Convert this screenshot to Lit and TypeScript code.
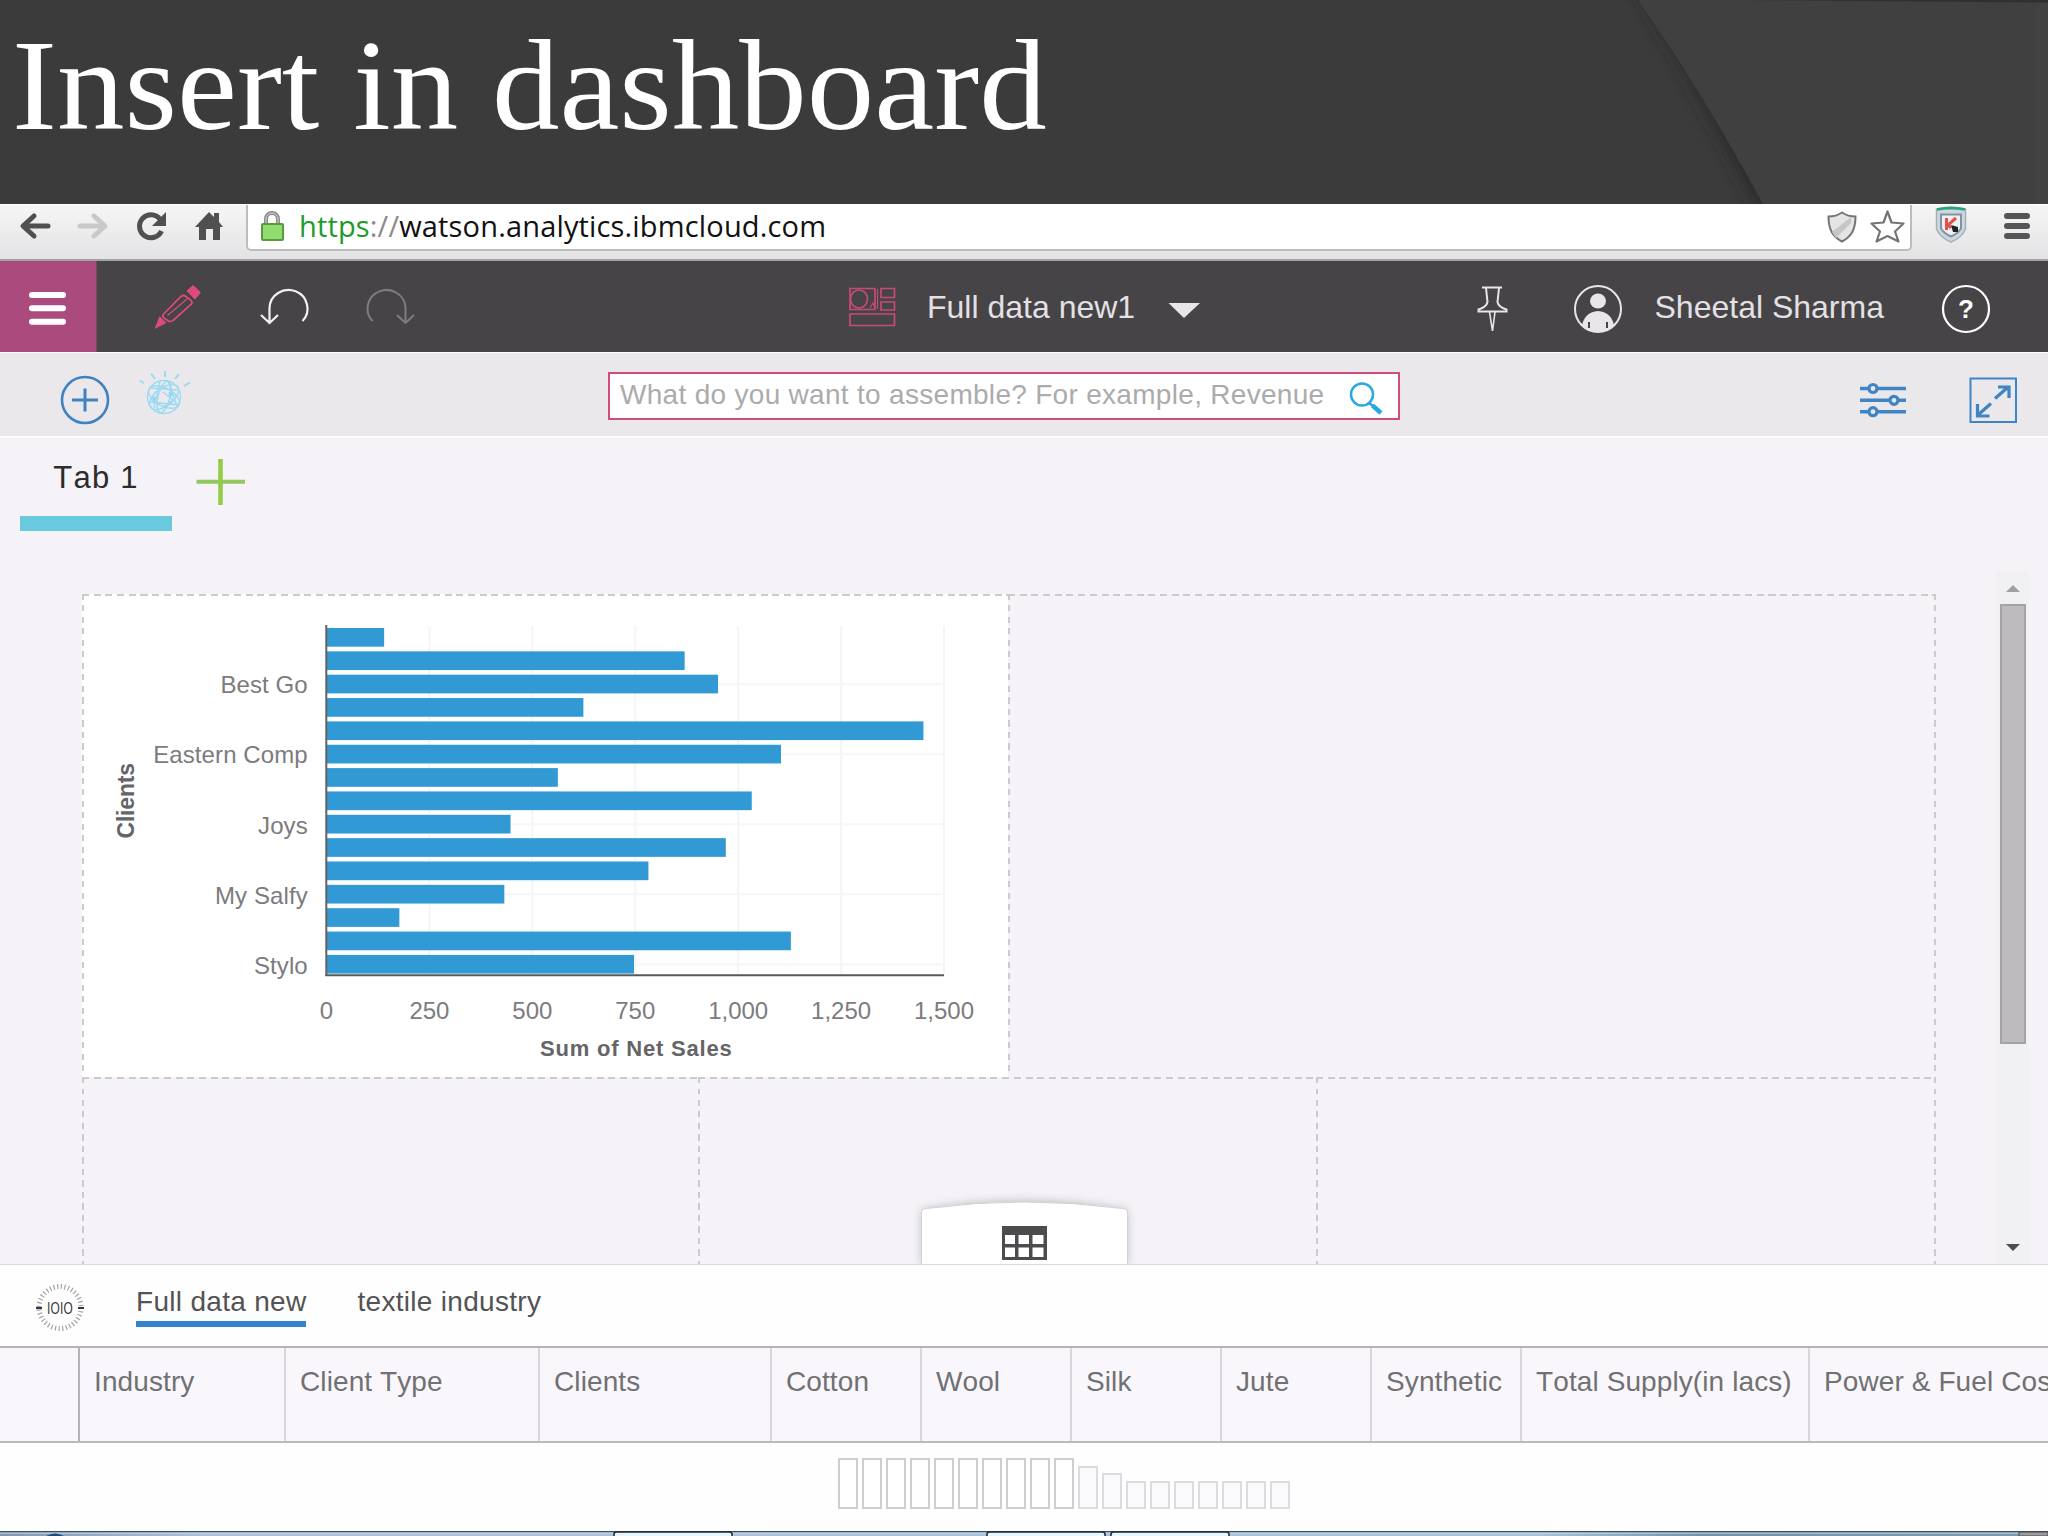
import { LitElement, html, css, svg } from "lit";
import { customElement } from "lit/decorators.js";
import { classMap } from "lit/directives/class-map.js";

/* Every icon's viewBox uses page coordinates, so paths can be read against the layout. */

@customElement("slide-title")
class SlideTitle extends LitElement {
  static styles = css`
    :host { display: block; height: 204px; background: #3b3b3b; position: relative; overflow: hidden; }
    h1 { margin: 0; padding: 21px 0 0 12px; color: #fff; font: 400 135px/140px "Liberation Serif", serif; white-space: nowrap; position: relative; transform: scaleY(0.95); transform-origin: 0 0; }
    svg { position: absolute; right: 0; top: 0; }
  `;
  render() {
    return html`
      <svg width="548" height="204" viewBox="1500 0 548 204">
        <defs>
          <filter id="soft" x="-50%" y="-20%" width="200%" height="140%"><feGaussianBlur stdDeviation="8" /></filter>
        </defs>
        <path d="M1632 -20 1690 80 1760 212H2100V-20Z" fill="#262626" opacity=".75" filter="url(#soft)" />
        <path d="M1638 0Q1700 88 1763 204H2048V0Z" fill="#404040" />
        <path d="M1735 0 2048 2.5V0Z" fill="#303030" />
        <path d="M2036 3h12v201h-12Z" fill="#444" opacity=".5" />
      </svg>
      <h1>Insert in dashboard</h1>
    `;
  }
}

@customElement("browser-bar")
class BrowserBar extends LitElement {
  static styles = css`
    :host { display: flex; box-sizing: border-box; height: 57px; background: linear-gradient(#f6f6f6, #e3e2e4); border-bottom: 2px solid #a3a2a5; border-top: 1px solid #fff; }
    svg { display: block; flex: none; }
    .address { display: flex; width: 1666px; height: 46px; box-sizing: border-box; background: #fff; border: 2px solid #bdbcbf; border-top: 0; border-radius: 0 0 5px 5px; margin-left: -1px; margin-right: 1px; }
    .url { width: 1520px; font: 29px/42px "Open Sans", "Noto Sans", sans-serif; color: #111; white-space: nowrap; letter-spacing: 0.160px; }
    .scheme { color: #1f9a2c; }
    .slashes { color: #8b8b8b; }
  `;
  render() {
    return html`
      <svg width="247" height="46" viewBox="0 205 247 46" fill="none" stroke-linecap="round" stroke-linejoin="round">
        <path d="M48 226H24M34 216 23 226l11 10" stroke="#505052" stroke-width="5" />
        <path d="M80 226h24M94 216l11 10-11 10" stroke="#c9c9cb" stroke-width="5" />
        <path d="M160 219a11.500 11.500 0 1 0 1.500 12" stroke="#505052" stroke-width="5" stroke-linecap="butt" />
        <path d="M166 212v14h-14Z" fill="#505052" />
        <path d="M195 227 209 212l5 5v-4h5v9l4 5h-3v13h-7v-11h-7v11h-7v-13Z" fill="#505052" />
      </svg>
      <div class="address">
        <svg width="51" height="44" viewBox="249 205 51 44">
          <path d="M267 224v-5a6 6 0 0 1 12 0v5" fill="none" stroke="#8b8b8d" stroke-width="4" />
          <path d="M267 224v-5a6 6 0 0 1 12 0v5" fill="none" stroke="#d5d5d5" stroke-width="1" />
          <rect x="263" y="224" width="21" height="16" rx="1" fill="#90dd6d" stroke="#5a9a3f" stroke-width="2" />
        </svg>
        <span class="url"><span class="scheme">https</span><span class="slashes">://</span>watson.analytics.ibmcloud.com</span>
        <svg width="91" height="44" viewBox="1819 205 91 44">
          <path d="M1842 212.500q-6 4-13.500 4c0 13 4 20 13.500 25 9.500-5 13.500-12 13.500-25q-7.500 0-13.500-4Z" fill="#e4e4e4" stroke="#757577" stroke-width="2" />
          <path d="M1832 232 1851 217v6l-15 15Z" fill="#c6c6c6" />
          <path d="M1887.500 211.500 1891.500 222.500 1903.500 223.500 1895 231.500 1898.500 241.500 1887.500 236 1876.500 241.500 1880 231.500 1871.500 223.500 1883.500 222.500Z" fill="#fff" stroke="#737375" stroke-width="2.200" stroke-linejoin="round" />
        </svg>
      </div>
      <svg width="135" height="54" viewBox="1913 205 135 54">
        <path d="M1936.500 209q14.500-3 29 0v20q-4 9-14.500 13-10.500-4-14.500-13Z" fill="#cfd8df" stroke="#a3b0ba" stroke-width="1.500" />
        <path d="M1937 209.500q14-3 28 0" fill="none" stroke="#2ba184" stroke-width="2.800" />
        <path d="M1941 214.500h20v14q-3 5-10 8-7-3-10-8Z" fill="#edf1f4" stroke="#8493a2" stroke-width="2" />
        <path d="M1946.500 218v12M1956 218l-8 7 3 3" fill="none" stroke="#e4504c" stroke-width="3" />
        <path d="M1951 225l7 2v5h-5Z" fill="#222" />
        <path d="M2007 216h20M2007 226h20M2007 236h20" stroke="#555557" stroke-width="6" stroke-linecap="round" />
      </svg>
    `;
  }
}

@customElement("app-bar")
class AppBar extends LitElement {
  static styles = css`
    :host { display: flex; height: 92px; background: #464446; color: #e3e1e5; font: 32px/92px "Liberation Sans", Arial, sans-serif; white-space: nowrap; border-bottom: 1px solid #fff; box-sizing: border-box; }
    svg { display: block; flex: none; }
    .name { box-sizing: border-box; width: 242px; padding-left: 1px; }
    .user { box-sizing: border-box; width: 317px; padding-left: 1.500px; }
  `;
  render() {
    return html`
      <svg width="97" height="91" viewBox="0 261 97 91">
        <path d="M0 261h96.500v91H0Z" fill="#aa4a7d" />
        <path d="M32 295h31M32 308.300h31M32 321.700h31" stroke="#fff" stroke-width="6" stroke-linecap="round" />
      </svg>
      <svg width="829" height="91" viewBox="97 261 829 91" fill="none">
        <path d="M154.500 329l5-13 7 7Z" fill="#dc4a7b" />
        <path d="M187 291l6-5.500 7.500 7-5.500 6.500Z" fill="#dc4a7b" stroke="#dc4a7b" />
        <path d="M163.500 314 181 296.500q2.500-2 5 0l5 4q2 2 0 4l-18 16q-3 2-5.500 0l-4-3q-1.500-1.500 0-3.500Z" stroke="#dc4a7b" stroke-width="1.700" />
        <path d="M167.500 315.500 187 299" stroke="#dc4a7b" stroke-width="1.200" />
        <path d="M269.500 323V308a19 18.500 0 1 1 33 13M261 315l8.500 8 8.500-8" stroke="#f2f1f3" stroke-width="2.200" />
        <path d="M405.500 323V308a19 18.500 0 1 0-33 13M397 315l8.500 8 8.500-8" stroke="#7e7c7f" stroke-width="2" />
        <g stroke="#c84a77" stroke-width="1.700">
          <path d="M850 288.500h25v21h-25ZM881 288.500h13.500v9H881ZM881 302h13.500v8H881ZM850 314h44.500v11.500H850Z" />
          <ellipse cx="859" cy="299" rx="8.500" ry="9" />
          <path d="M870 308l3-5 2 5M877.500 289v20" stroke-width="1.200" />
        </g>
      </svg>
      <span class="name">Full data new1</span>
      <svg width="485" height="91" viewBox="1168 261 485 91" fill="none">
        <path d="M1168.500 303h31.500l-16 15Z" fill="#e8e6ea" />
        <g stroke="#e8e6ea" stroke-width="2">
          <path d="M1482 287.500h20M1486 288l1.500 14q-1 5-9 7.500v2h28v-2q-8-2.500-9-7.500l1.500-14" />
          <path d="M1489.500 312 1492.500 331 1495 312" stroke-width="1.600" />
        </g>
        <circle cx="1598" cy="309" r="23" stroke="#e8e6ea" stroke-width="2" />
        <ellipse cx="1598" cy="301" rx="8" ry="7.500" fill="#e8e6ea" />
        <path d="M1582 325q3-13 16-14 13 1 16 14-6 7-16 7t-16-7Z" fill="#e8e6ea" />
        <path d="M1589 322v6M1607 322v6" stroke="#464446" stroke-width="2" />
      </svg>
      <span class="user">Sheetal Sharma</span>
      <svg width="78" height="91" viewBox="1970 261 78 91" overflow="visible">
        <circle cx="1966" cy="309" r="23" fill="none" stroke="#fff" stroke-width="2.200" />
        <text x="1966" y="318" text-anchor="middle" fill="#fff" font-size="26" font-weight="bold">?</text>
      </svg>
    `;
  }
}

@customElement("tool-bar")
class ToolBar extends LitElement {
  static styles = css`
    :host { display: flex; box-sizing: border-box; height: 85px; background: #eae8eb; border-bottom: 2px solid #fdfcfe; }
    svg { display: block; flex: none; }
    .search { display: flex; box-sizing: border-box; width: 792px; height: 48px; margin-top: 19px; border: 2px solid #cf4d7e; background: #fff; color: #ababad; padding-left: 10px; font: 28px/42px "Liberation Sans", Arial, sans-serif; letter-spacing: 0.3px; white-space: nowrap; }
    .prompt { width: 720px; }
  `;
  render() {
    const rays = [
      [144, 383, 139.500, 380.500], [155, 379, 151, 373.500], [165, 377, 165, 371],
      [175, 379, 179, 374], [184, 386, 190, 382.500],
    ];
    return html`
      <svg width="608" height="83" viewBox="0 353 608 83" fill="none">
        <circle cx="85" cy="400" r="23" stroke="#3f82c0" stroke-width="2.600" />
        <path d="M72 400h26M85 388.500v23" stroke="#3f82c0" stroke-width="3" />
        <g stroke="#9bdaf3" stroke-width="1.400">
          ${rays.map(([a, b, c, d]) => svg`<path d="M${a} ${b} ${c} ${d}" stroke-width="2" />`)}
          <circle cx="164" cy="397" r="16.500" />
          <ellipse cx="164" cy="397" rx="17" ry="9" transform="rotate(28 164 397)" />
          <ellipse cx="164" cy="397" rx="17" ry="9" transform="rotate(-38 164 397)" />
          <ellipse cx="164" cy="397" rx="6" ry="16" transform="rotate(14 164 397)" />
          <path d="M151 388l26 2M149 402l30 3M160 381l-6 27M168 381l9 25M163 392l10 8-12 9" />
          <circle cx="154" cy="399" r="2" fill="#8fd6f2" />
          <circle cx="171" cy="394" r="2" fill="#8fd6f2" />
        </g>
      </svg>
      <div class="search">
        <span class="prompt">What do you want to assemble? For example, Revenue</span>
        <svg width="44" height="44" viewBox="1340 374 44 44" fill="none" stroke="#27a8e0">
          <circle cx="1362" cy="394.500" r="11" stroke-width="2.500" />
          <path d="M1369 403l4 3" stroke-width="2.500" />
          <path d="M1372.500 405.500 1381 413" stroke-width="4.500" />
        </svg>
      </div>
      <svg width="648" height="83" viewBox="1400 353 648 83" fill="none" stroke="#3f84c5">
        <path d="M1860 388.500h46M1860 400.300h46M1860 411.700h46" stroke-width="3.400" />
        <g fill="#eae8eb" stroke-width="3.200"><circle cx="1873" cy="388.500" r="4" /><circle cx="1894" cy="400.300" r="4" /><circle cx="1873" cy="411.700" r="4" /></g>
        <path d="M1970.500 378.500h45.500v43.500H1970.500Z" stroke-width="2" />
        <path d="M1995 398.500 2007 388M1998 387h11v11M1991 403.500 1979 414M1977.500 404v12h12" stroke-width="3.200" />
      </svg>
    `;
  }
}

@customElement("tab-strip")
class TabStrip extends LitElement {
  static styles = css`
    :host { display: flex; height: 134px; padding-left: 20px; box-sizing: border-box; }
    .tab { box-sizing: border-box; width: 152px; height: 93px; padding-top: 19px; border-bottom: 15px solid #69cadf; text-align: center; font: 31px/42px "Liberation Sans", Arial, sans-serif; font-kerning: none; letter-spacing: 1.200px; color: #2c2b2d; }
    svg { margin: 18px 0 0 20px; }
  `;
  render() {
    return html`
      <div class="tab">Tab 1</div>
      <svg width="56" height="56" viewBox="192 456 56 56">
        <path d="M196.500 481.700h48.500" stroke="#93c860" stroke-width="4" />
        <path d="M220.500 459v46" stroke="#93cc48" stroke-width="4.600" />
      </svg>
    `;
  }
}

@customElement("sales-chart")
class SalesChart extends LitElement {
  static styles = css`
    :host { display: block; }
    svg { display: block; }
    text { font: 24px "Liberation Sans", Arial, sans-serif; fill: #7c7b7e; }
    .title { font-weight: bold; font-size: 22px; fill: #656467; }
    .side { font-size: 23px; }
  `;
  private values = [140, 870, 951, 624, 1450, 1104, 562, 1033, 447, 970, 782, 432, 177, 1128, 747];
  private names: Record<number, string> = { 2: "Best Go", 5: "Eastern Comp", 8: "Joys", 11: "My Salfy", 14: "Stylo" };
  render() {
    const x = (v: number) => 326.5 + v * 0.41167;
    const top = (i: number) => 628 + i * 23.35;
    const ticks = [0, 250, 500, 750, 1000, 1250, 1500];
    return html`
      <svg width="924" height="481" viewBox="85 596 924 481">
        ${ticks.slice(1).map((t) => svg`<path d="M${x(t)} 626V974" stroke="#f6f4f7" stroke-width="2" />`)}
        ${Object.keys(this.names).map((i) => svg`<path d="M327 ${top(+i) + 9.5}H944" stroke="#f6f5f7" stroke-width="2" />`)}
        ${this.values.map((v, i) => svg`<rect x="327" y=${top(i)} width=${x(v) - 327} height="18.700" fill="#319ad4" />`)}
        <path d="M326.300 625V976" stroke="#626164" stroke-width="2" />
        <path d="M325.500 975.300H944" stroke="#59585b" stroke-width="2" />
        ${Object.entries(this.names).map(([i, n]) => svg`<text x="307.800" y=${top(+i) + 18.7} text-anchor="end" letter-spacing=".1">${n}</text>`)}
        ${ticks.map((t) => svg`<text x=${x(t)} y="1018.500" text-anchor="middle">${t.toLocaleString("en-US")}</text>`)}
        <text class="title" x="540" y="1056" letter-spacing=".8">Sum of Net Sales</text>
        <text class="title side" transform="translate(133.500 838.500) rotate(-90)" letter-spacing="-.2">Clients</text>
      </svg>
    `;
  }
}

@customElement("dash-board")
class DashBoard extends LitElement {
  static styles = css`
    :host { display: flex; height: 693px; padding-left: 82px; box-sizing: border-box; position: relative; overflow: hidden; border-bottom: 1px solid #dddbdf; }
    .grid { width: 1854px; margin-top: 22px; }
    .row { display: grid; }
    .top { grid-template-columns: 926px 928px; height: 483px; }
    .low { grid-template-columns: 616px 618px 620px; height: 187px; }
    .cell { background:
      repeating-linear-gradient(90deg, #cbcacd 0 7px, transparent 7px 11.700px) 0 0 / 100% 2px no-repeat,
      repeating-linear-gradient(#cbcacd 0 6px, transparent 6px 11.500px) 0 0 / 2px 100% no-repeat; }
    .last { background:
      repeating-linear-gradient(90deg, #cbcacd 0 7px, transparent 7px 11.700px) 0 0 / 100% 2px no-repeat,
      repeating-linear-gradient(#cbcacd 0 6px, transparent 6px 11.500px) 0 0 / 2px 100% no-repeat,
      repeating-linear-gradient(#cbcacd 0 6px, transparent 6px 11.500px) 100% 0 / 2px 100% no-repeat; }
    .filled { background-color: #fff; padding: 2px 0 0 3px; box-sizing: border-box; }
    .scroll { width: 33px; height: 692px; margin-left: 60px; background: #f1f0f3; display: flex; flex-direction: column; align-items: center; }
    .thumb { width: 26px; height: 440px; box-sizing: border-box; background: #bdbbbe; border: 2px solid #a5a3a6; margin-bottom: auto; margin-right: -1px; }
    .up { margin: 12px 0; }
    .down { margin-bottom: 12px; }
    .pull { position: absolute; left: 902px; bottom: -1px; }
    svg { display: block; flex: none; }
  `;
  render() {
    return html`
      <div class="grid">
        <div class="row top">
          <div class="cell filled"><sales-chart></sales-chart></div>
          <div class="cell last"></div>
        </div>
        <div class="row low">
          <div class="cell"></div>
          <div class="cell"></div>
          <div class="cell last"></div>
        </div>
      </div>
      <div class="scroll">
        <svg class="up" width="14" height="8" viewBox="0 0 14 8"><path d="M0 8 7 1l7 7Z" fill="#a09fa1" /></svg>
        <div class="thumb"></div>
        <svg class="down" width="14" height="8" viewBox="0 0 14 8"><path d="M0 0 7 7l7-7Z" fill="#4d4c4e" /></svg>
      </div>
      <svg class="pull" width="245" height="80" viewBox="902 1185 245 80">
        <defs><filter id="glow" x="-20%" y="-40%" width="140%" height="180%"><feGaussianBlur stdDeviation="5" /></filter></defs>
        <path d="M922 1265V1210Q1024 1192 1127 1210V1265Z" fill="#9b9a9d" opacity=".65" filter="url(#glow)" />
        <path d="M921.500 1270V1213q0-4 5-4.500 98-13 196 0 5 .5 5 4.500V1270Z" fill="#fff" stroke="#d2d1d4" stroke-width="1" />
        <path d="M1002 1226h45v34h-45Z" fill="#4d4b4e" />
        <path d="M1005 1235h10v9h-10ZM1018.500 1235h10.500v9h-10.500ZM1032.500 1235h11v9h-11ZM1005 1247.500h10v9.500h-10ZM1018.500 1247.500h10.500v9.500h-10.500ZM1032.500 1247.500h11v9.500h-11Z" fill="#fff" />
      </svg>
    `;
  }
}

@customElement("data-tray")
class DataTray extends LitElement {
  static styles = css`
    :host { display: block; height: 266px; background: #fefefe; font: 28px/32px "Liberation Sans", Arial, sans-serif; font-kerning: none; color: #535255; white-space: nowrap; letter-spacing: 0.1px; }
    .sets { display: flex; height: 81px; box-sizing: border-box; letter-spacing: 0.3px; }
    svg { display: block; }
    .set { height: 62px; box-sizing: border-box; padding-top: 21px; margin-left: 36px; border-bottom: 6px solid transparent; }
    .set + .set { margin-left: 51px; }
    .active { border-color: #3583ca; }
    .columns { display: grid; grid-template-columns: 80px 206px 254px 232px 150px 150px 150px 150px 150px 288px 238px; height: 97px; box-sizing: border-box; border-top: 2px solid #b3b2b5; border-bottom: 2px solid #b9b8bb; background: #f9f7fb; color: #717073; overflow: hidden; }
    .col { padding: 18px 0 0 14px; border-right: 2px solid #d8d6da; overflow: hidden; }
    .col:last-child { border-right: 0; }
    .stub { border-color: #b3b2b5; }
    .meter { display: flex; align-items: flex-end; gap: 4px; height: 66px; padding: 0 0 0 838px; }
    .bar { box-sizing: border-box; width: 20px; height: 28px; border: 2px solid #dddbdf; background: #faf9fc; }
    .tall { height: 51px; border-color: #cecdd0; background: #fff; }
    .mid { height: 43px; }
    .low { height: 36px; }
  `;
  render() {
    const columns = ["", "Industry", "Client Type", "Clients", "Cotton", "Wool", "Silk", "Jute", "Synthetic", "Total Supply(in lacs)", "Power & Fuel Cost"];
    return html`
      <div class="sets">
        <svg width="100" height="81" viewBox="0 1265 100 81">
          <circle cx="60" cy="1307.500" r="21" fill="none" stroke="#a5a4a7" stroke-width="5" stroke-dasharray="1.200 2.470" />
          <path d="M36 1308h6M78 1308h6" stroke="#39383a" stroke-width="2" />
          <text x="60" y="1313.500" text-anchor="middle" font-size="16" fill="#39383a" textLength="26" lengthAdjust="spacingAndGlyphs">IOIO</text>
        </svg>
        <div class="set active">Full data new</div>
        <div class="set">textile industry</div>
      </div>
      <div class="columns">
        ${columns.map((c, i) => html`<div class=${classMap({ col: true, stub: i === 0 })}>${c}</div>`)}
      </div>
      <div class="meter">
        ${Array.from({ length: 19 }, (_, i) => html`<div class=${classMap({ bar: true, tall: i < 10, mid: i === 10, low: i === 11 })}></div>`)}
      </div>
    `;
  }
}

@customElement("task-bar")
class TaskBar extends LitElement {
  static styles = css`
    :host { display: block; height: 5px; }
    svg { display: block; }
  `;
  render() {
    return html`
      <svg width="2048" height="5" viewBox="0 1531 2048 5">
        <defs><linearGradient id="sky"><stop offset="0" stop-color="#8297b0" /><stop offset=".1" stop-color="#a9c0d6" /><stop offset=".75" stop-color="#a9c2d8" /><stop offset=".83" stop-color="#7591ab" /><stop offset="1" stop-color="#8099b0" /></linearGradient></defs>
        <path d="M0 1531h2048v5H0Z" fill="url(#sky)" />
        <path d="M0 1533h2048" stroke="#d5e3ee" stroke-width="1" />
        <path d="M0 1531.500h2048" stroke="#35505f" stroke-width="1.500" />
        <path d="M46 1536q9-5 18 0Z" fill="#1c4c78" />
        <g fill="#eaf4fb" stroke="#182733" stroke-width="1.500">
          <path d="M614 1537v-3q0-2 3-2h112q3 0 3 2v3ZM987 1537v-3q0-2 3-2h112q3 0 3 2v3ZM1111 1537v-3q0-2 3-2h112q3 0 3 2v3Z" />
        </g>
        <path d="M2019 1532h29v4h-29Z" fill="#9c9b9e" stroke="#4c4b4e" />
      </svg>
    `;
  }
}

@customElement("app-root")
class AppRoot extends LitElement {
  static styles = css`
    :host { display: flex; flex-direction: column; width: 2048px; height: 1536px; overflow: hidden; background: #f5f3f7; }
  `;
  render() {
    return html`
      <slide-title></slide-title>
      <browser-bar></browser-bar>
      <app-bar></app-bar>
      <tool-bar></tool-bar>
      <tab-strip></tab-strip>
      <dash-board></dash-board>
      <data-tray></data-tray>
      <task-bar></task-bar>
    `;
  }
}
